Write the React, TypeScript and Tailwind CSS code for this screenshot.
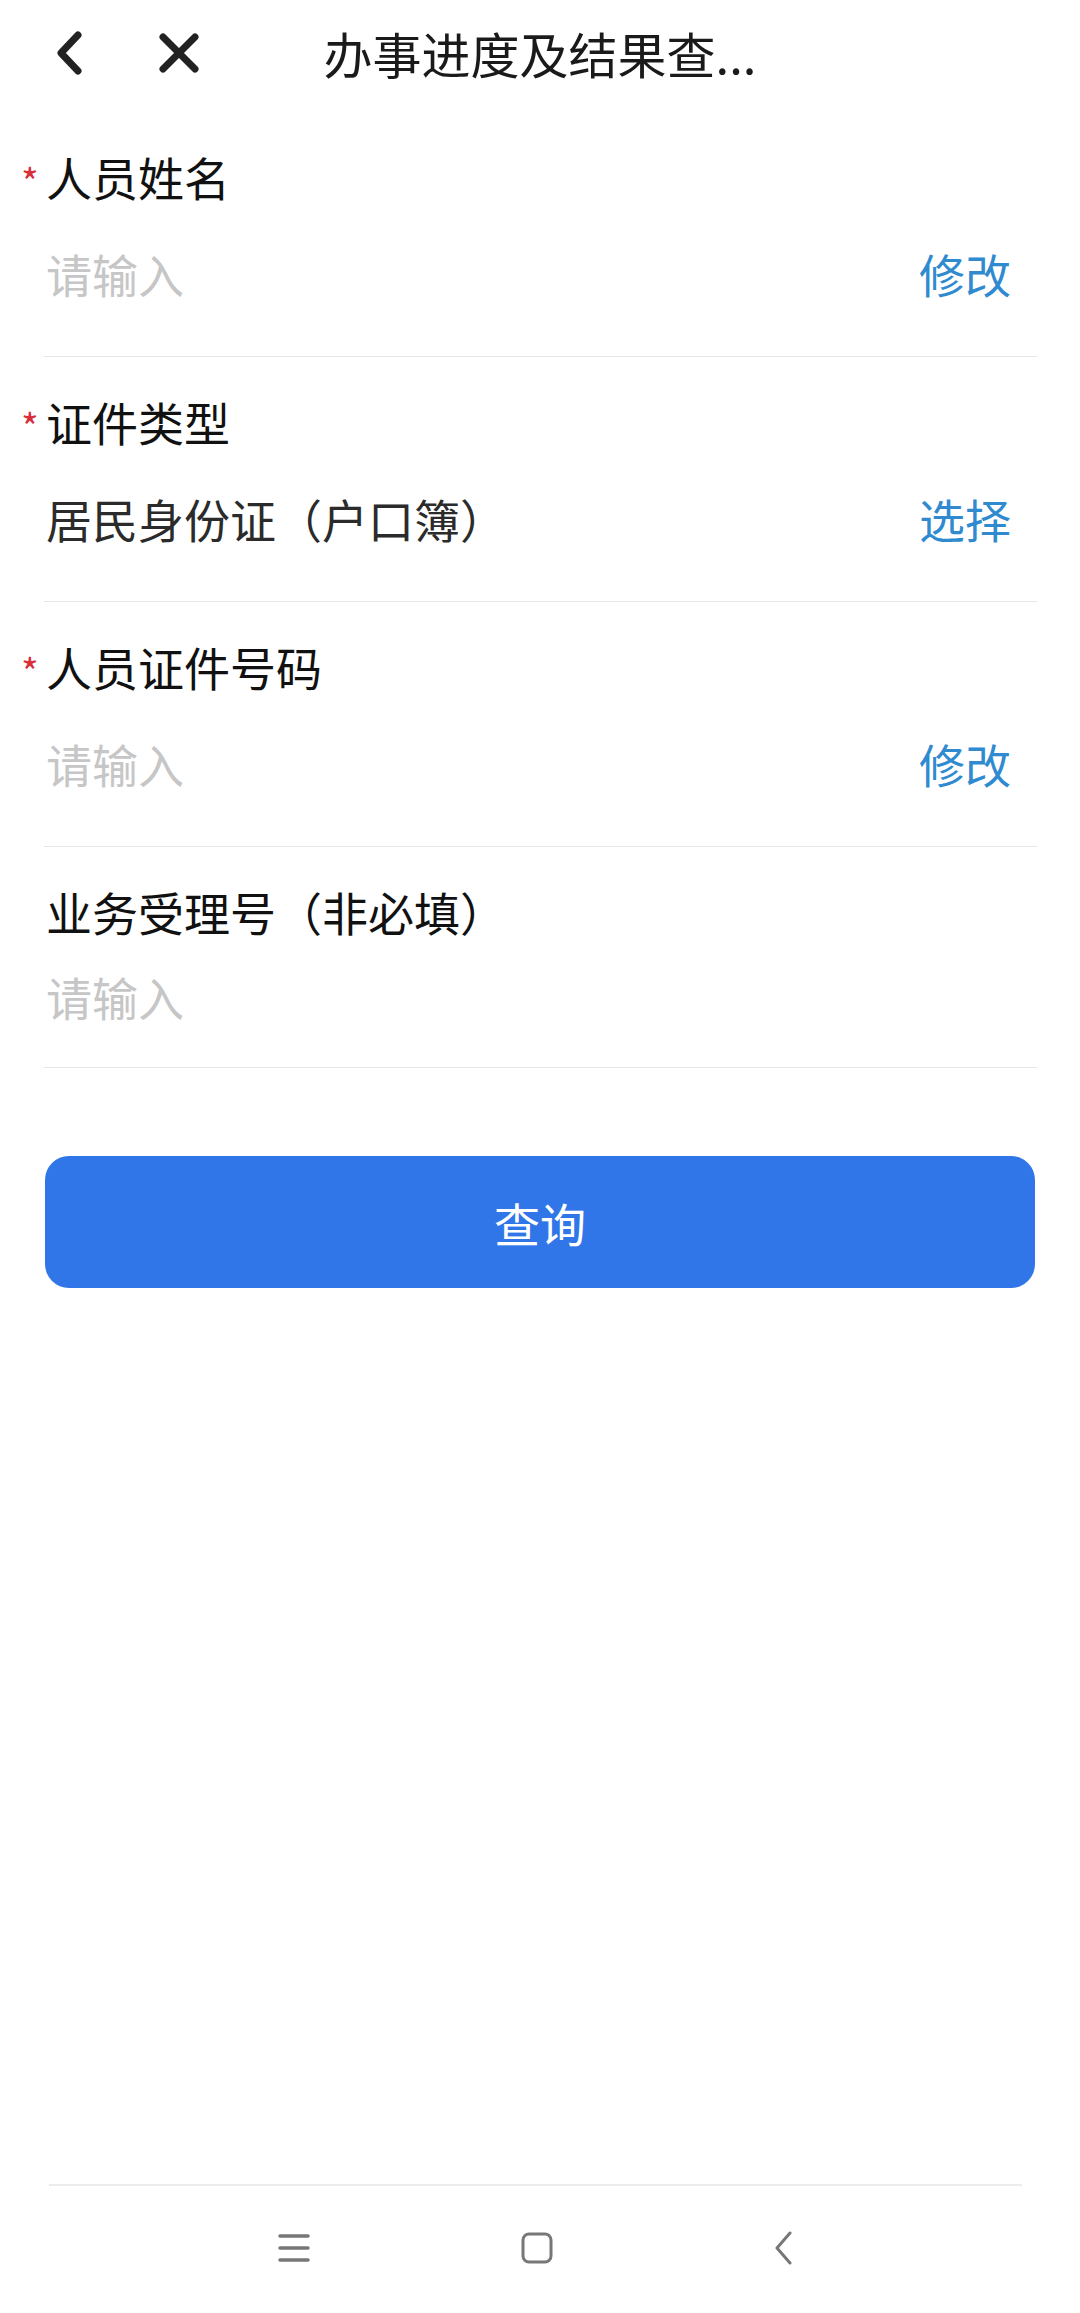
import React from "react";

const FONT = "font-['Noto_Sans_CJK_SC','Noto_Sans',sans-serif]";

function Label({ text, required }: { text: string; required?: boolean }) {
  return (
    <div className="relative h-[60px] flex items-center text-[46px] leading-none text-[#111111]">
      {required && (
        <span className="absolute left-[-25px] top-[16px] text-[38px] leading-none text-[#d8303a]">*</span>
      )}
      {text}
    </div>
  );
}

function Field({
  label,
  required,
  value,
  placeholder,
  action,
  last,
}: {
  label: string;
  required?: boolean;
  value?: string;
  placeholder?: string;
  action?: string;
  last?: boolean;
}) {
  return (
    <div className="ml-[44px] mr-[43px] border-b border-[#e6e6e6] pt-[34px] pb-[16px]">
      <div className="pl-[2px]">
        <Label text={label} required={required} />
        <div className={`flex items-center justify-between pr-[26px] text-[46px] leading-none ${last ? "h-[110px]" : "h-[134px]"}`}>
          {value ? (
            <span className="text-[#2b2b2b]">{value}</span>
          ) : (
            <span className="text-[#c6c6c6]">{placeholder}</span>
          )}
          {action && <span className="text-[#2f8ad0]">{action}</span>}
        </div>
      </div>
    </div>
  );
}

export default function App() {
  return (
    <div className={`min-h-[2313px] bg-white flex flex-col ${FONT}`}>
      {/* header */}
      <div className="relative h-[112px] flex items-center">
        <div className="flex items-center pl-[52px] gap-[72px] pb-[6px]">
          <svg width="34" height="48" viewBox="0 0 34 48">
            <path d="M26 6 L9 24 L26 42" fill="none" stroke="#222" strokeWidth="7" strokeLinecap="round" strokeLinejoin="round" />
          </svg>
          <svg width="42" height="42" viewBox="0 0 42 42">
            <path d="M5 5 L37 37 M37 5 L5 37" fill="none" stroke="#222" strokeWidth="7" strokeLinecap="round" />
          </svg>
        </div>
        <div className="absolute inset-x-0 top-0 h-[112px] flex items-center justify-center pb-[8px] pointer-events-none">
          <span className="text-[49px] leading-none text-[#1a1a1a]">办事进度及结果查...</span>
        </div>
      </div>

      <Field label="人员姓名" required placeholder="请输入" action="修改" />
      <Field label="证件类型" required value="居民身份证（户口簿）" action="选择" />
      <Field label="人员证件号码" required placeholder="请输入" action="修改" />
      <Field label="业务受理号（非必填）" placeholder="请输入" last />

      <div className="px-[45px] pt-[88px]">
        <button className="w-full h-[132px] rounded-[24px] bg-[#3176e8] text-white text-[46px] leading-none">
          查询
        </button>
      </div>

      {/* system nav */}
      <div className="mt-auto">
        <div className="ml-[49px] mr-[58px] border-t-2 border-[#ececec]" />
        <div className="h-[127px] flex items-center pl-[278px] pb-[4px]">
          <svg width="32" height="30" viewBox="0 0 32 30">
            <path d="M2 3 H30 M2 15 H30 M2 27 H30" stroke="#777" strokeWidth="3.5" strokeLinecap="round" />
          </svg>
          <svg className="ml-[211px]" width="32" height="32" viewBox="0 0 32 32">
            <rect x="2" y="2" width="28" height="28" rx="6" fill="none" stroke="#777" strokeWidth="3" />
          </svg>
          <svg className="ml-[220px]" width="20" height="34" viewBox="0 0 20 34">
            <path d="M17 2 L4 17 L17 32" fill="none" stroke="#777" strokeWidth="3" strokeLinecap="round" strokeLinejoin="round" />
          </svg>
        </div>
      </div>
    </div>
  );
}
